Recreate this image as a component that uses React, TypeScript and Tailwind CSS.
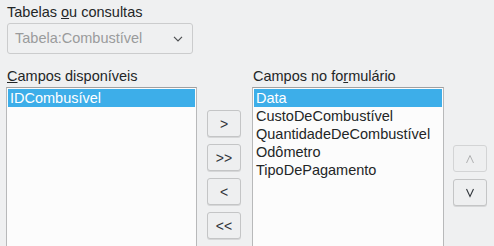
import React from 'react';

const left = ['IDCombusível'];
const right = ['Data', 'CustoDeCombustível', 'QuantidadeDeCombustível', 'Odômetro', 'TipoDePagamento'];

const Btn = ({ children, disabled }: { children: React.ReactNode; disabled?: boolean }) => (
  <button
    className={
      'w-[34px] h-[27px] rounded-[3px] border border-[#c4c5c6] bg-[#eeeff0] text-[14px] leading-none flex items-center justify-center shadow-[0_1px_0_#d6d7d8] ' +
      (disabled ? 'text-[#a8a9aa] border-[#d3d4d5] shadow-none' : 'text-[#31363b]')
    }
  >
    {children}
  </button>
);

const List = ({ items, w }: { items: string[]; w: string }) => (
  <div className={`${w} h-[170px] border border-[#b8b9ba] border-t-[#9fa0a1] bg-[#fcfcfc] p-px`}>
    {items.map((it, i) => (
      <div
        key={it}
        className={
          'h-[18px] leading-[18px] pl-[2px] text-[14.5px] ' +
          (i === 0 ? 'bg-[#3daee9] text-white' : 'text-[#232627]')
        }
      >
        {it}
      </div>
    ))}
  </div>
);

export default function App() {
  return (
    <div
      className="w-[494px] h-[246px] overflow-hidden bg-[#eff0f1] text-[#232627] text-[14.5px] pl-[6px] pt-[2px]"
      style={{ fontFamily: '"Liberation Sans", Arial, sans-serif' }}
    >
      <div className="h-[21px] leading-[21px] pl-px">
        Tabelas <span className="underline">o</span>u consultas
      </div>
      <div className="ml-px w-[186px] h-[31px] rounded-[3px] border border-[#cbcccd] bg-[#eff0f1] flex items-center justify-between pl-[7px] pr-[9px] text-[#9a9b9c]">
        <span>Tabela:Combustível</span>
        <svg width="10" height="6" viewBox="0 0 10 6" fill="none" stroke="#4d4f51" strokeWidth="1.2">
          <path d="M1 0.8 L5 4.8 L9 0.8" />
        </svg>
      </div>
      <div className="flex mt-[12px]">
        <div className="flex flex-col">
          <div className="h-[21px] leading-[21px] pl-px">
            <span className="underline">C</span>ampos disponíveis
          </div>
          <List items={left} w="w-[191px]" />
        </div>
        <div className="flex flex-col gap-[7px] pt-[44px] ml-[10px]">
          <Btn>&gt;</Btn>
          <Btn>&gt;&gt;</Btn>
          <Btn>&lt;</Btn>
          <Btn>&lt;&lt;</Btn>
        </div>
        <div className="flex flex-col ml-[11px]">
          <div className="h-[21px] leading-[21px] pl-px">
            Campos no fo<span className="underline">r</span>mulário
          </div>
          <List items={right} w="w-[192px]" />
        </div>
        <div className="flex flex-col gap-[7px] pt-[79px] ml-[9px]">
          <Btn disabled>
            <svg width="10" height="10" viewBox="0 0 10 10" fill="none" stroke="#b0b1b2" strokeWidth="1">
              <path d="M1.5 9 L5 1.5 L8.5 9" />
            </svg>
          </Btn>
          <Btn>
            <svg width="10" height="10" viewBox="0 0 10 10" fill="none" stroke="#31363b" strokeWidth="1.1">
              <path d="M1.5 1 L5 8.5 L8.5 1" />
            </svg>
          </Btn>
        </div>
      </div>
    </div>
  );
}
